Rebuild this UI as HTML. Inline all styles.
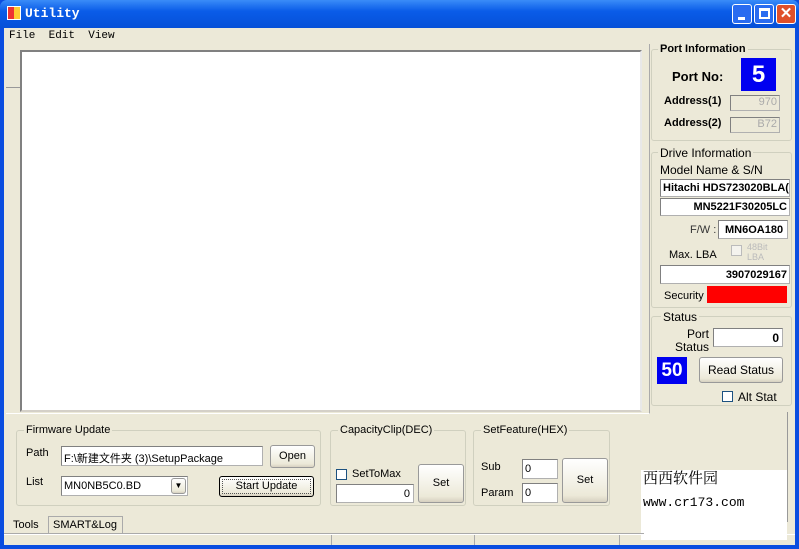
<!DOCTYPE html><html><head><style>
*{margin:0;padding:0;box-sizing:border-box}
body{width:799px;height:549px;overflow:hidden;background:#0a4de0;font-family:"Liberation Sans","Noto Sans CJK SC",sans-serif;font-size:12px;position:relative}
.a{position:absolute}
.tb{left:0;top:0;width:799px;height:28px;background:linear-gradient(#3a8cf8,#0a5ce8 40%,#0550d8);border-radius:7px 7px 0 0}
.cl{left:4px;top:28px;width:791px;height:517px;background:#ece9d8}
.gb{border:1px solid #d0d0bf;border-radius:3px}
.lg{background:#ece9d8;padding:0 2px}
.in{background:#fff;border:1px solid #b0b0b0;border-top-color:#808080;border-left-color:#808080}
.btn{background:linear-gradient(#fff,#ece9d8 85%,#d6d0c0);border:1px solid #999;border-radius:3px;text-align:center}
.r{text-align:right}
.b{font-weight:bold}
.blue{background:#0000f0;color:#fff;font-weight:bold;text-align:center}
.s{font-size:11px}
</style></head><body>
<div class="a tb"></div>
<div class="a" style="left:7px;top:6px;width:14px;height:14px;background:linear-gradient(90deg,#e33 50%,#fc3 50%);border:1px solid #fff"></div>
<div class="a" style="left:25px;top:6px;color:#fff;font:bold 13px 'Liberation Mono',monospace">Utility</div>
<div class="a" style="left:732px;top:4px;width:20px;height:20px;background:#2a6cf0;border:1px solid #fff;border-radius:3px"><div class="a" style="left:5px;top:12px;width:7px;height:3px;background:#fff"></div></div>
<div class="a" style="left:754px;top:4px;width:20px;height:20px;background:#2a6cf0;border:1px solid #fff;border-radius:3px"><div class="a" style="left:4px;top:3px;width:11px;height:11px;border:2px solid #fff;border-top-width:3px"></div></div>
<div class="a" style="left:776px;top:4px;width:20px;height:20px;background:#e0502a;border:1px solid #fff;border-radius:3px;color:#fff;font:bold 15px 'Liberation Sans';text-align:center;line-height:18px">✕</div>
<div class="a cl"></div>
<div class="a" style="left:9px;top:30px;font:11px 'Liberation Mono',monospace">File&nbsp; Edit&nbsp; View</div>
<div class="a" style="left:6px;top:87px;width:14px;height:1px;background:#999"></div>
<div class="a" style="left:6px;top:44px;width:644px;height:370px;border-right:1px solid #aaa;border-bottom:1px solid #fff"></div>
<div class="a" style="left:20px;top:50px;width:622px;height:362px;background:#fff;border:2px solid #808080;border-right-color:#e8e8e8;border-bottom-color:#d4d0c8"></div>
<!-- Port info -->
<div class="a gb" style="left:651px;top:49px;width:141px;height:92px"></div>
<div class="a b lg s" style="left:658px;top:43px">Port Information</div>
<div class="a b" style="left:672px;top:69px;font-size:13px">Port No:</div>
<div class="a blue" style="left:741px;top:58px;width:35px;height:33px;font-size:24px;line-height:33px">5</div>
<div class="a b s" style="left:664px;top:95px">Address(1)</div>
<div class="a in r s" style="left:730px;top:95px;width:50px;height:16px;background:#ece9d8;color:#aaa;padding-right:2px">970</div>
<div class="a b s" style="left:664px;top:117px">Address(2)</div>
<div class="a in r s" style="left:730px;top:117px;width:50px;height:16px;background:#ece9d8;color:#aaa;padding-right:2px">B72</div>
<!-- drive -->
<div class="a gb" style="left:651px;top:152px;width:141px;height:156px"></div>
<div class="a lg" style="left:658px;top:146px">Drive Information</div>
<div class="a" style="left:660px;top:163px">Model Name &amp; S/N</div>
<div class="a in b s" style="left:660px;top:179px;width:130px;height:18px;padding:2px 2px;overflow:hidden;white-space:nowrap">Hitachi HDS723020BLA(</div>
<div class="a in b r s" style="left:660px;top:198px;width:130px;height:18px;padding:2px 2px">MN5221F30205LC</div>
<div class="a s" style="left:690px;top:224px;color:#333">F/W :</div>
<div class="a in b s" style="left:718px;top:220px;width:70px;height:19px;padding:3px 6px">MN6OA180</div>
<div class="a s" style="left:669px;top:249px">Max. LBA</div>
<div class="a" style="left:731px;top:245px;width:11px;height:11px;border:1px solid #bbb;background:#f4f3ee"></div>
<div class="a" style="left:747px;top:242px;font-size:9px;color:#bbb;line-height:10px">48Bit<br>LBA</div>
<div class="a in b r s" style="left:660px;top:265px;width:130px;height:19px;padding:3px 2px">3907029167</div>
<div class="a s" style="left:664px;top:290px">Security</div>
<div class="a" style="left:707px;top:286px;width:80px;height:17px;background:#f00"></div>
<!-- status -->
<div class="a gb" style="left:651px;top:316px;width:141px;height:90px"></div>
<div class="a lg" style="left:661px;top:310px">Status</div>
<div class="a r" style="left:670px;top:328px;width:39px;line-height:13px">Port<br>Status</div>
<div class="a in b r" style="left:713px;top:328px;width:70px;height:19px;padding:2px 3px">0</div>
<div class="a blue" style="left:657px;top:357px;width:30px;height:27px;font-size:19px;line-height:27px">50</div>
<div class="a btn" style="left:699px;top:357px;width:84px;height:26px;line-height:24px">Read Status</div>
<div class="a" style="left:722px;top:391px;width:11px;height:11px;border:1px solid #1c5180;background:#fff"></div>
<div class="a" style="left:738px;top:390px">Alt Stat</div>
<!-- bottom -->
<div class="a gb" style="left:16px;top:430px;width:305px;height:76px"></div>
<div class="a lg s" style="left:24px;top:424px">Firmware Update</div>
<div class="a s" style="left:26px;top:447px">Path</div>
<div class="a in s" style="left:61px;top:446px;width:202px;height:20px;padding:3px 2px">F:\新建文件夹 (3)\SetupPackage</div>
<div class="a btn s" style="left:270px;top:445px;width:45px;height:23px;line-height:21px">Open</div>
<div class="a s" style="left:26px;top:476px">List</div>
<div class="a in s" style="left:61px;top:476px;width:127px;height:20px;padding:3px 2px">MN0NB5C0.BD</div>
<div class="a btn" style="left:171px;top:478px;width:15px;height:16px;font-size:8px;line-height:14px">▼</div>
<div class="a btn s" style="left:219px;top:476px;width:95px;height:21px;line-height:19px;border:1px solid #000;outline:1px dotted #555;outline-offset:-4px">Start Update</div>
<div class="a gb" style="left:330px;top:430px;width:136px;height:76px"></div>
<div class="a lg s" style="left:338px;top:424px">CapacityClip(DEC)</div>
<div class="a" style="left:336px;top:469px;width:11px;height:11px;border:1px solid #1c5180;background:#fff"></div>
<div class="a s" style="left:352px;top:468px">SetToMax</div>
<div class="a in r s" style="left:336px;top:484px;width:78px;height:19px;padding:3px 3px">0</div>
<div class="a btn s" style="left:418px;top:464px;width:46px;height:39px;line-height:37px">Set</div>
<div class="a gb" style="left:473px;top:430px;width:137px;height:76px"></div>
<div class="a lg s" style="left:481px;top:424px">SetFeature(HEX)</div>
<div class="a s" style="left:481px;top:461px">Sub</div>
<div class="a in s" style="left:522px;top:459px;width:36px;height:20px;padding:3px 2px">0</div>
<div class="a s" style="left:481px;top:487px">Param</div>
<div class="a in s" style="left:522px;top:483px;width:36px;height:20px;padding:3px 2px">0</div>
<div class="a btn s" style="left:562px;top:458px;width:46px;height:45px;line-height:43px">Set</div>
<div class="a" style="left:641px;top:470px;width:146px;height:70px;background:#fff"></div>
<div class="a" style="left:643px;top:467px;font:15px 'Noto Serif CJK SC',serif">西西软件园</div>
<div class="a" style="left:643px;top:495px;font:13px 'Liberation Mono',monospace">www.cr173.com</div>
<div class="a" style="left:787px;top:412px;width:1px;height:110px;background:#999"></div>
<div class="a s" style="left:13px;top:519px">Tools</div>
<div class="a s" style="left:48px;top:516px;width:75px;height:18px;border:1px solid #aaa;border-bottom:none;padding:2px 4px;background:#ece9d8">SMART&amp;Log</div>
<div class="a" style="left:4px;top:533px;width:640px;height:1px;background:#aaa"></div>
<div class="a" style="left:4px;top:534px;width:791px;height:11px;border-top:1px solid #fff"></div>
<div class="a" style="left:331px;top:535px;width:1px;height:10px;background:#aaa"></div>
<div class="a" style="left:474px;top:535px;width:1px;height:10px;background:#aaa"></div>
<div class="a" style="left:619px;top:535px;width:1px;height:10px;background:#aaa"></div>
</body></html>
